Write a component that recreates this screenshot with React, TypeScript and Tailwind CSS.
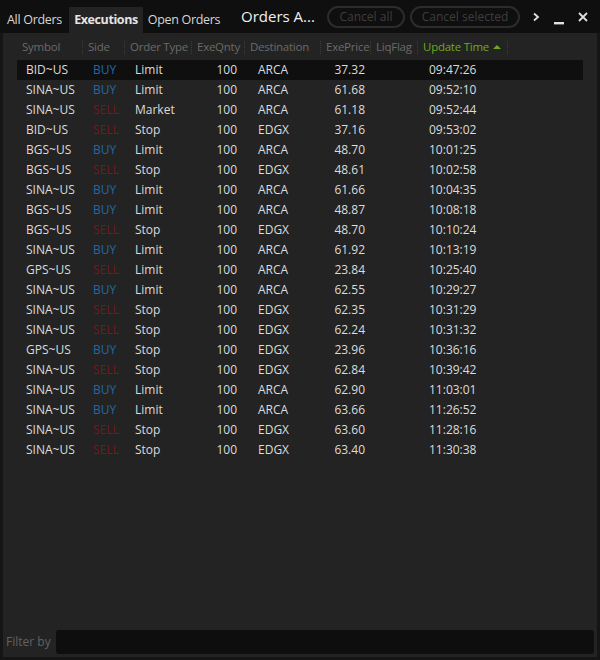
import React from 'react';

type Row = {
  symbol: string;
  side: 'BUY' | 'SELL';
  type: string;
  qty: number;
  dest: string;
  price: string;
  time: string;
};

const rows: Row[] = [
  { symbol: 'BID~US', side: 'BUY', type: 'Limit', qty: 100, dest: 'ARCA', price: '37.32', time: '09:47:26' },
  { symbol: 'SINA~US', side: 'BUY', type: 'Limit', qty: 100, dest: 'ARCA', price: '61.68', time: '09:52:10' },
  { symbol: 'SINA~US', side: 'SELL', type: 'Market', qty: 100, dest: 'ARCA', price: '61.18', time: '09:52:44' },
  { symbol: 'BID~US', side: 'SELL', type: 'Stop', qty: 100, dest: 'EDGX', price: '37.16', time: '09:53:02' },
  { symbol: 'BGS~US', side: 'BUY', type: 'Limit', qty: 100, dest: 'ARCA', price: '48.70', time: '10:01:25' },
  { symbol: 'BGS~US', side: 'SELL', type: 'Stop', qty: 100, dest: 'EDGX', price: '48.61', time: '10:02:58' },
  { symbol: 'SINA~US', side: 'BUY', type: 'Limit', qty: 100, dest: 'ARCA', price: '61.66', time: '10:04:35' },
  { symbol: 'BGS~US', side: 'BUY', type: 'Limit', qty: 100, dest: 'ARCA', price: '48.87', time: '10:08:18' },
  { symbol: 'BGS~US', side: 'SELL', type: 'Stop', qty: 100, dest: 'EDGX', price: '48.70', time: '10:10:24' },
  { symbol: 'SINA~US', side: 'BUY', type: 'Limit', qty: 100, dest: 'ARCA', price: '61.92', time: '10:13:19' },
  { symbol: 'GPS~US', side: 'SELL', type: 'Limit', qty: 100, dest: 'ARCA', price: '23.84', time: '10:25:40' },
  { symbol: 'SINA~US', side: 'BUY', type: 'Limit', qty: 100, dest: 'ARCA', price: '62.55', time: '10:29:27' },
  { symbol: 'SINA~US', side: 'SELL', type: 'Stop', qty: 100, dest: 'EDGX', price: '62.35', time: '10:31:29' },
  { symbol: 'SINA~US', side: 'SELL', type: 'Stop', qty: 100, dest: 'EDGX', price: '62.24', time: '10:31:32' },
  { symbol: 'GPS~US', side: 'BUY', type: 'Stop', qty: 100, dest: 'EDGX', price: '23.96', time: '10:36:16' },
  { symbol: 'SINA~US', side: 'SELL', type: 'Stop', qty: 100, dest: 'EDGX', price: '62.84', time: '10:39:42' },
  { symbol: 'SINA~US', side: 'BUY', type: 'Limit', qty: 100, dest: 'ARCA', price: '62.90', time: '11:03:01' },
  { symbol: 'SINA~US', side: 'BUY', type: 'Limit', qty: 100, dest: 'ARCA', price: '63.66', time: '11:26:52' },
  { symbol: 'SINA~US', side: 'SELL', type: 'Stop', qty: 100, dest: 'EDGX', price: '63.60', time: '11:28:16' },
  { symbol: 'SINA~US', side: 'SELL', type: 'Stop', qty: 100, dest: 'EDGX', price: '63.40', time: '11:30:38' },
];

// column template shared by header and rows
const cols = 'grid grid-cols-[66px_42px_67px_53px_76px_50px_47px_90px_1fr]';

const HeaderCell: React.FC<{ label: string; active?: boolean }> = ({ label, active }) => (
  <div className="flex items-center h-full overflow-hidden">
    <span className={`pl-[5px] whitespace-nowrap text-[11.5px] tracking-[-0.25px] ${active ? 'text-[#6ca81e]' : 'text-[#6a6a6a]'}`}>
      {label}
      {active && <span className="inline-block ml-[4px] align-middle border-x-[4px] border-x-transparent border-b-[4px] border-b-[#6ca81e] mb-[3px]"></span>}
    </span>
    <div className="ml-auto shrink-0 h-[13px] border-r border-dotted border-[#3c3c3c]"></div>
  </div>
);

const App: React.FC = () => {
  return (
    <div
      className="w-[600px] h-[660px] bg-[#0f0f0f] flex flex-col text-[12px] overflow-hidden"
      style={{ fontFamily: '"Open Sans", "Noto Sans", sans-serif' }}
    >
      {/* Top bar */}
      <div className="h-[33px] flex items-end shrink-0 whitespace-nowrap">
        <div className="flex items-end h-full shrink-0">
          <div className="h-[26px] w-[69px] flex items-center justify-center text-[#d6d6d6] text-[12.5px] tracking-[-0.3px]">All Orders</div>
          <div className="h-[26px] w-[74px] flex items-center justify-center bg-[#232323] text-[#e4e4e4] font-bold text-[12.5px] tracking-[-0.4px]">Executions</div>
          <div className="h-[26px] w-[82px] flex items-center justify-center text-[#d6d6d6] text-[12.5px] tracking-[-0.3px]">Open Orders</div>
        </div>
        <div className="h-full flex items-center ml-[16px] w-[84px] shrink-0 text-[#f0f0f0] text-[15px]">Orders A...</div>
        <div className="h-full flex items-center ml-[2px] gap-[5px] shrink-0">
          <button className="h-[22px] w-[78px] rounded-full border-2 border-[#2c2c2c] text-[#3e3e3e] text-[12px]">Cancel all</button>
          <button className="h-[22px] w-[110px] rounded-full border-2 border-[#2c2c2c] text-[#3e3e3e] text-[12px]">Cancel selected</button>
        </div>
        <div className="h-full flex items-center ml-auto pr-[12px] gap-[14px] text-[#e0e0e0]">
          <svg width="8" height="10" viewBox="0 0 8 10"><path d="M2 1.5 L6 5 L2 8.5" stroke="#e0e0e0" strokeWidth="1.8" fill="none" /></svg>
          <svg width="10" height="10" viewBox="0 0 10 10" className="mt-[6px]"><rect x="0" y="7" width="10" height="2.4" fill="#e0e0e0" /></svg>
          <svg width="10" height="10" viewBox="0 0 10 10"><path d="M1 1 L9 9 M9 1 L1 9" stroke="#e0e0e0" strokeWidth="1.8" /></svg>
        </div>
      </div>

      {/* Main panel */}
      <div className="flex-1 bg-[#232323] border-l-[3px] border-r-[3px] border-b-[3px] border-[#151515] flex flex-col min-h-0">
        <div className="flex-1 pl-[14px] pr-[14px] pt-[4px]">
          <div className={`${cols} h-[20px]`}>
            <HeaderCell label="Symbol" />
            <HeaderCell label="Side" />
            <HeaderCell label="Order Type" />
            <HeaderCell label="ExeQnty" />
            <HeaderCell label="Destination" />
            <HeaderCell label="ExePrice" />
            <HeaderCell label="LiqFlag" />
            <HeaderCell label="Update Time" active />
            <div></div>
          </div>
          <div className="mt-[3px]">
            {rows.map((r, i) => (
              <div
                key={i}
                className={`${cols} h-[20px] items-center text-[#dcdcdc] ${i === 0 ? 'bg-[#0f0f0f]' : ''}`}
              >
                <div className="pl-[9px] whitespace-nowrap">{r.symbol}</div>
                <div className={`pl-[10px] ${r.side === 'BUY' ? 'text-[#1f6aa5]' : 'text-[#7c1616]'}`}>{r.side}</div>
                <div className="pl-[10px]">{r.type}</div>
                <div className="pr-[8px] text-right">{r.qty}</div>
                <div className="pl-[13px]">{r.dest}</div>
                <div className="pr-[6px] text-right">{r.price}</div>
                <div></div>
                <div className="pl-[11px]">{r.time}</div>
                <div></div>
              </div>
            ))}
          </div>
        </div>

        {/* Filter bar */}
        <div className="h-[27px] flex items-center mb-[2px] shrink-0">
          <span className="pl-[3px] w-[53px] text-[#626262] text-[12px] whitespace-nowrap">Filter by</span>
          <input className="flex-1 h-[24px] mr-[3px] rounded-[3px] bg-[#0e0e0e] outline-none text-[#ccc] px-2" />
        </div>
      </div>
    </div>
  );
};

export default App;
